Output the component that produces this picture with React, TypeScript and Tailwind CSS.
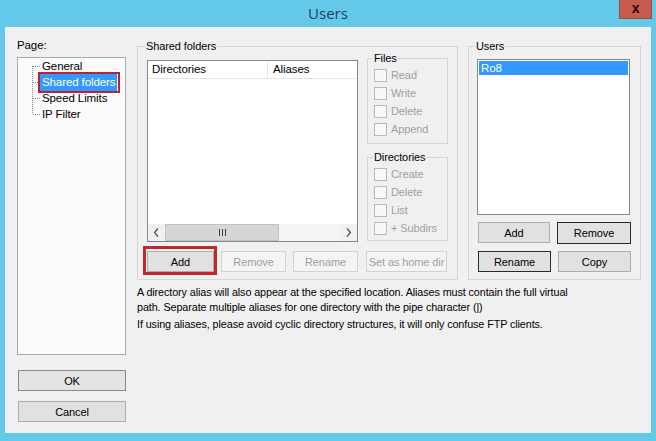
import React from "react";

const F = "font-['Liberation_Sans',Arial,sans-serif]";

type BtnProps = {
  children: React.ReactNode;
  w: string;
  variant?: "normal" | "disabled" | "dark" | "default";
  className?: string;
};

function Btn({ children, w, variant = "normal", className = "" }: BtnProps) {
  const base = "h-[21px] flex items-center justify-center text-[11px] leading-[14px] border whitespace-nowrap overflow-hidden";
  const v =
    variant === "disabled"
      ? "bg-[#f4f4f4] border-[#d2d2d2] text-[#a0a0a0]"
      : variant === "dark"
      ? "bg-[#e1e1e1] border-[#2a2a2a] text-black"
      : variant === "default"
      ? "bg-[#e3e3e3] border-[#7f8c99] text-black"
      : "bg-[#e1e1e1] border-[#adadad] text-black";
  return <div className={`${base} ${v} ${w} ${className}`}>{children}</div>;
}

function Check({ label }: { label: string }) {
  return (
    <div className="h-[18px] flex items-center pl-[6px]">
      <div className="w-[13px] h-[13px] border border-[#b9b9b9] bg-[#f8f8f8]" />
      <span className="ml-[4px] text-[11px] leading-[14px] text-[#a0a0a0]">{label}</span>
    </div>
  );
}

function TreeRow({ label, first, last, selected }: { label: string; first?: boolean; last?: boolean; selected?: boolean }) {
  return (
    <div className="h-[16px] flex items-center">
      <svg width="22" height="16" className="shrink-0">
        <line
          x1="14.5"
          y1={first ? 8 : 0}
          x2="14.5"
          y2={last ? 8 : 16}
          stroke="#8a8a8a"
          strokeWidth="1"
          strokeDasharray="1 1"
        />
        <line x1="15" y1="8.5" x2="22" y2="8.5" stroke="#8a8a8a" strokeWidth="1" strokeDasharray="1 1" />
      </svg>
      {selected ? (
        <span className="relative h-[17px] px-[2px] bg-[#3399ff] text-white text-[11.5px] leading-[17px]">
          {label}
          <span className="absolute left-[-2px] right-[-3px] top-[-2px] bottom-[-2px] border-[2px] border-[#b8233a]" />
        </span>
      ) : (
        <span className="px-[2px] text-[11.5px] leading-[16px] text-black">{label}</span>
      )}
    </div>
  );
}

function Chevron({ dir }: { dir: "left" | "right" }) {
  return (
    <svg width="7" height="9" viewBox="0 0 7 9">
      {dir === "left" ? (
        <polyline points="5,0.5 1.5,4.5 5,8.5" fill="none" stroke="#505050" strokeWidth="1.2" />
      ) : (
        <polyline points="2,0.5 5.5,4.5 2,8.5" fill="none" stroke="#505050" strokeWidth="1.2" />
      )}
    </svg>
  );
}

function GroupLabel({ children, left }: { children: React.ReactNode; left: string }) {
  return (
    <span className={`absolute -top-[8px] ${left} px-[1px] bg-[#f0f0f0] text-[11px] leading-[14px] text-black`}>
      {children}
    </span>
  );
}

export default function App() {
  return (
    <div className={`w-[656px] h-[441px] bg-[#64c8e9] flex flex-col overflow-hidden tracking-[-0.1px] ${F}`}>
      {/* Title bar */}
      <div className="relative h-[27px] flex items-center justify-center shrink-0">
        <span className="text-[15px] leading-[18px] tracking-normal text-[#1d3f60] font-['Open_Sans','Liberation_Sans',sans-serif] mt-[-1px]">
          Users
        </span>
        <div className="absolute right-[4px] top-0 w-[33px] h-[19px] bg-[#c75a4e] border border-[#9c4a40] border-t-0 flex items-center justify-center">
          <span className="text-[14px] leading-[14px] font-bold text-[#2a0808] mt-[-2px]">x</span>
        </div>
      </div>

      {/* Client area */}
      <div className="mx-[5px] mb-[8px] flex-1 bg-[#f0f0f0] flex items-start">
        {/* Left column */}
        <div className="ml-[12px] w-[109px] flex flex-col">
          <div className="mt-[11px] h-[14px] text-[11.5px] leading-[14px] text-black">Page:</div>
          <div className="mt-[5px] h-[298px] border border-[#a9a9a9] bg-[#fbfbfb]">
            <TreeRow label="General" first />
            <TreeRow label="Shared folders" selected />
            <TreeRow label="Speed Limits" />
            <TreeRow label="IP Filter" last />
          </div>
          <Btn w="w-[108px]" variant="default" className="mt-[15px] ml-[1px]">
            OK
          </Btn>
          <Btn w="w-[108px]" className="mt-[10px] ml-[1px] border-[#9a9a9a]">
            Cancel
          </Btn>
        </div>

        {/* Right area */}
        <div className="ml-[11px] mt-[19px] flex flex-col">
          <div className="flex">
            {/* Shared folders group */}
            <div className="relative w-[321px] h-[234px] border border-[#d5d5d5] pl-[9px] pt-[11px]">
              <GroupLabel left="left-[7px]">Shared folders</GroupLabel>
              <div className="flex items-start">
                {/* List view */}
                <div className="mt-[2px] w-[211px] h-[182px] border border-[#828790] bg-white flex flex-col">
                  <div className="h-[18px] flex border-b border-[#e5e5e5] text-[11.5px] leading-[17px] text-black">
                    <div className="w-[120px] pl-[4px] border-r border-[#e5e5e5]">Directories</div>
                    <div className="pl-[5px]">Aliases</div>
                  </div>
                  <div className="flex-1" />
                  <div className="h-[17px] flex bg-[#f0f0f0]">
                    <div className="w-[17px] flex items-center justify-center">
                      <Chevron dir="left" />
                    </div>
                    <div className="flex-1 flex">
                      <div className="w-[114px] h-[17px] bg-[#d6d6d6] border border-[#c2c2c2] flex items-center justify-center">
                        <svg width="7" height="7">
                          <rect x="0" y="0" width="1" height="7" fill="#404040" />
                          <rect x="3" y="0" width="1" height="7" fill="#404040" />
                          <rect x="6" y="0" width="1" height="7" fill="#404040" />
                        </svg>
                      </div>
                      <div className="flex-1 bg-[#f4f4f4]" />
                    </div>
                    <div className="w-[17px] flex items-center justify-center">
                      <Chevron dir="right" />
                    </div>
                  </div>
                </div>

                {/* Files / Directories */}
                <div className="ml-[9px] flex flex-col">
                  <div className="relative w-[81px] h-[86px] border border-[#d5d5d5] pt-[7px]">
                    <GroupLabel left="left-[5px]">Files</GroupLabel>
                    <Check label="Read" />
                    <Check label="Write" />
                    <Check label="Delete" />
                    <Check label="Append" />
                  </div>
                  <div className="relative mt-[13px] w-[81px] h-[84px] border border-[#d5d5d5] pt-[7px]">
                    <GroupLabel left="left-[5px]">Directories</GroupLabel>
                    <Check label="Create" />
                    <Check label="Delete" />
                    <Check label="List" />
                    <Check label="+ Subdirs" />
                  </div>
                </div>
              </div>

              {/* Buttons row */}
              <div className="mt-[9px] flex">
                <div className="relative">
                  <Btn w="w-[67px]">Add</Btn>
                  <span className="absolute left-[-4px] top-[-5px] right-[-3px] bottom-[-3px] border-[3px] border-[#c2272d]" />
                </div>
                <Btn w="w-[65px]" variant="disabled" className="ml-[7px]">
                  Remove
                </Btn>
                <Btn w="w-[65px]" variant="disabled" className="ml-[7px]">
                  Rename
                </Btn>
                <Btn w="w-[81px]" variant="disabled" className="ml-[8px]">
                  Set as home dir
                </Btn>
              </div>
            </div>

            {/* Users group */}
            <div className="relative ml-[10px] w-[173px] h-[234px] border border-[#d5d5d5] pl-[8px] pt-[12px]">
              <GroupLabel left="left-[6px]">Users</GroupLabel>
              <div className="w-[153px] h-[156px] border border-[#828790] bg-white p-[1px]">
                <div className="h-[14px] bg-[#3399ff] text-white text-[11.5px] leading-[14px] px-[2px]">Ro8</div>
              </div>
              <div className="mt-[7px] flex ml-[1px]">
                <Btn w="w-[72px]">Add</Btn>
                <Btn w="w-[74px]" variant="dark" className="ml-[7px] h-[22px]">
                  Remove
                </Btn>
              </div>
              <div className="mt-[7px] flex ml-[1px]">
                <Btn w="w-[73px]" variant="dark">
                  Rename
                </Btn>
                <Btn w="w-[73px]" className="ml-[7px]">
                  Copy
                </Btn>
              </div>
            </div>
          </div>

          {/* Info text */}
          <div className="mt-[5px] text-[10.8px] leading-[15px] text-black whitespace-nowrap">
            <div>A directory alias will also appear at the specified location. Aliases must contain the full virtual</div>
            <div>path. Separate multiple aliases for one directory with the pipe character (|)</div>
            <div className="mt-[2px]">If using aliases, please avoid cyclic directory structures, it will only confuse FTP clients.</div>
          </div>
        </div>
      </div>
    </div>
  );
}
